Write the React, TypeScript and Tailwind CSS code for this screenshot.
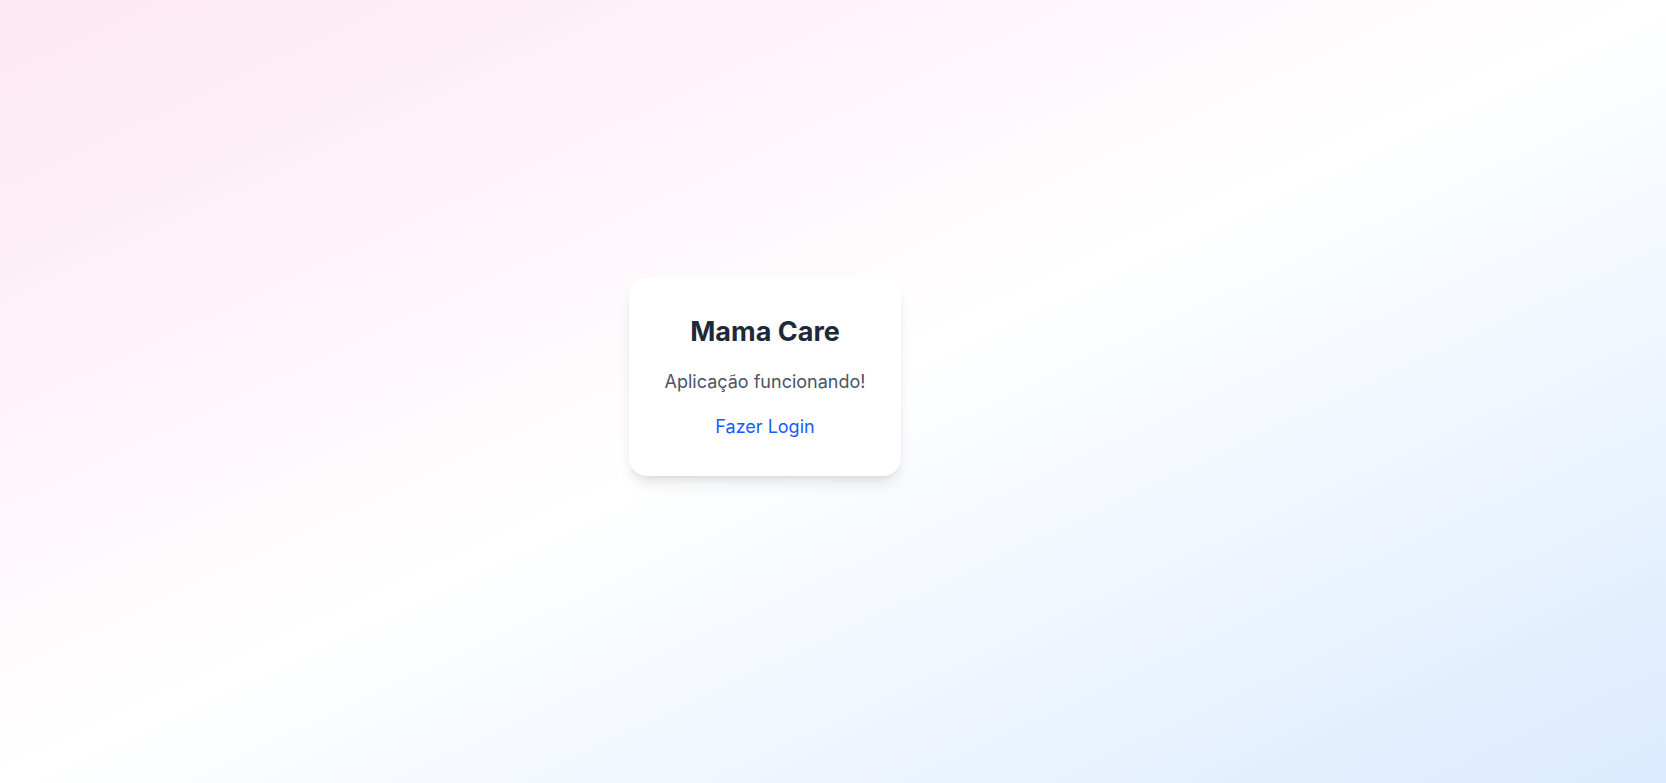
const App = () => {
  return (
    <div
      className="min-h-screen w-full flex items-center justify-center bg-gradient-to-br from-pink-100 via-white to-blue-100 pr-[136px] pb-[29px]"
      style={{ fontFamily: 'Inter, "Noto Sans", sans-serif' }}
    >
      {/* Card */}
      <div className="bg-white rounded-[18px] shadow-lg p-[36px] text-center">
        <h1 className="text-[27px] leading-[36px] font-bold text-gray-800 mb-[18px]">Mama Care</h1>
        <p className="text-[18px] leading-[27px] text-gray-600 mb-[18px]">Aplicação funcionando!</p>
        <a href="#" className="text-[18px] leading-[27px] text-blue-600 hover:underline">
          Fazer Login
        </a>
      </div>
    </div>
  );
};

export default App;
